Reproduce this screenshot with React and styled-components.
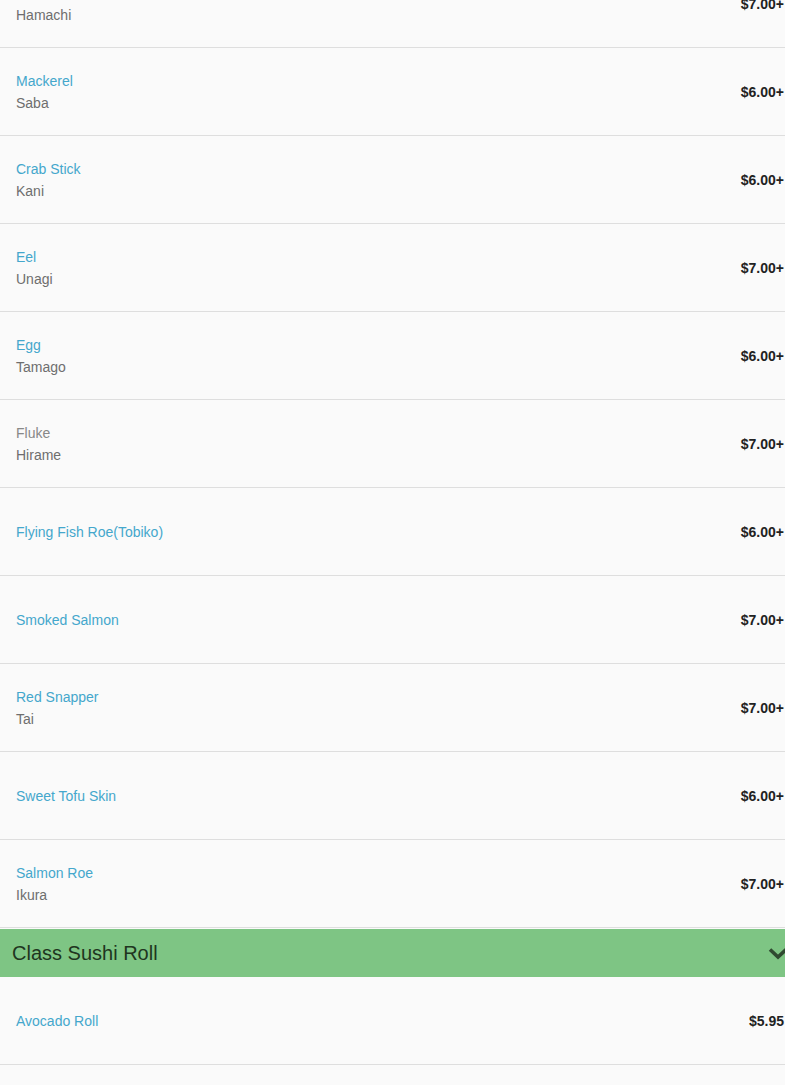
import styled, { createGlobalStyle } from 'styled-components'

const Global = createGlobalStyle`
  html, body {
    margin: 0;
    padding: 0;
    background: #fafafa;
    overflow: hidden;
  }
  body {
    font-family: "Liberation Sans", Arial, sans-serif;
  }
`

const nigiri = [
  { name: 'Yellowtail', sub: 'Hamachi', price: '$7.00+' },
  { name: 'Mackerel', sub: 'Saba', price: '$6.00+' },
  { name: 'Crab Stick', sub: 'Kani', price: '$6.00+' },
  { name: 'Eel', sub: 'Unagi', price: '$7.00+' },
  { name: 'Egg', sub: 'Tamago', price: '$6.00+' },
  { name: 'Fluke', sub: 'Hirame', price: '$7.00+', off: true },
  { name: 'Flying Fish Roe(Tobiko)', price: '$6.00+' },
  { name: 'Smoked Salmon', price: '$7.00+' },
  { name: 'Red Snapper', sub: 'Tai', price: '$7.00+' },
  { name: 'Sweet Tofu Skin', price: '$6.00+' },
  { name: 'Salmon Roe', sub: 'Ikura', price: '$7.00+' }
]

const rolls = [
  { name: 'Avocado Roll', price: '$5.95' },
  { name: 'Cucumber Roll', price: '$5.95' }
]

const App = () => {
  return (
    <Page>
      <Global />
      <List>
        {nigiri.map((item, idx) => (
          <Row key={idx}>
            <Info>
              <Name off={item.off}>{item.name}</Name>
              {item.sub && <Sub>{item.sub}</Sub>}
            </Info>
            <Price>{item.price}</Price>
          </Row>
        ))}
      </List>
      <Category>
        <CategoryTitle>Class Sushi Roll</CategoryTitle>
        <Chevron viewBox="0 0 20 13">
          <path d="M2 2.5 L10 10 L18 2.5" fill="none" stroke="#2f4a30" strokeWidth="3.6" strokeLinecap="butt" />
        </Chevron>
      </Category>
      <List>
        {rolls.map((item, idx) => (
          <Row key={idx}>
            <Info>
              <Name>{item.name}</Name>
            </Info>
            <Price>{item.price}</Price>
          </Row>
        ))}
      </List>
    </Page>
  )
}

export default App

const Page = styled.div`
  width: 785px;
  height: 1085px;
  overflow: hidden;
  background: #fafafa;
`

const List = styled.div`
  display: flex;
  flex-direction: column;
  &:first-child {
    margin-top: -40px;
  }
`

const Row = styled.div`
  display: flex;
  align-items: center;
  justify-content: space-between;
  height: 88px;
  box-sizing: border-box;
  padding: 0 1px 0 16px;
  border-bottom: 1px solid #dedede;
  background: #fafafa;
`

const Info = styled.div`
  display: flex;
  flex-direction: column;
`

const Name = styled.span`
  font-size: 14px;
  line-height: 22px;
  color: ${props => (props.off ? '#888888' : '#44a7cc')};
`

const Sub = styled.span`
  font-size: 14px;
  line-height: 22px;
  color: #6e6e6e;
`

const Price = styled.span`
  font-size: 14px;
  font-weight: bold;
  color: #222222;
`

const Category = styled.div`
  display: flex;
  align-items: center;
  justify-content: space-between;
  height: 48px;
  margin-top: 1px;
  padding-left: 12px;
  background: #7ec584;
  overflow: hidden;
`

const CategoryTitle = styled.span`
  font-size: 20px;
  color: #1f3520;
`

const Chevron = styled.svg`
  width: 20px;
  height: 13px;
  margin-right: -3px;
  flex-shrink: 0;
`
